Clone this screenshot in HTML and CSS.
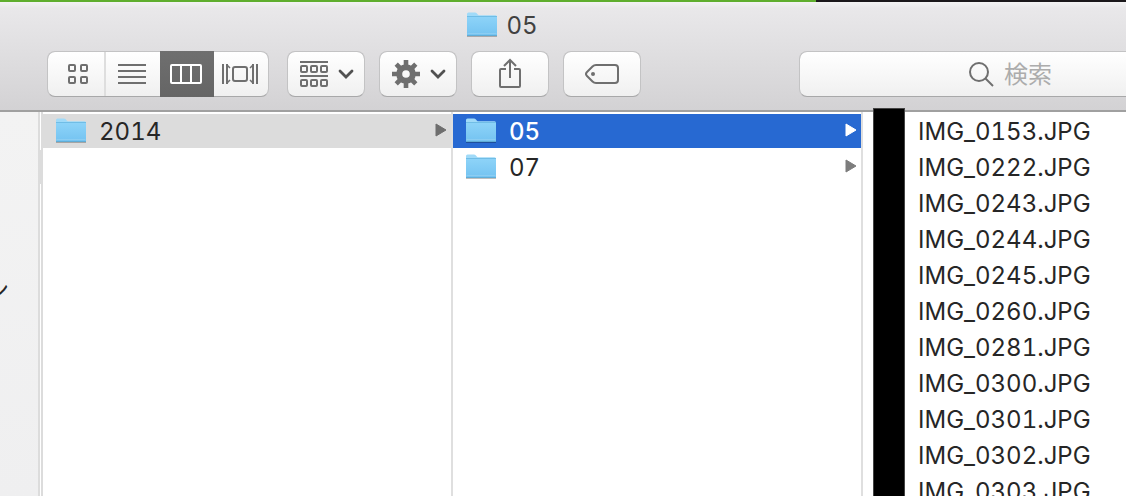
FILE: index.html
```html
<!DOCTYPE html>
<html lang="ja">
<head>
<meta charset="utf-8">
<title>05</title>
<link rel="stylesheet" href="styles.css">
</head>
<body>
<svg class="defs" aria-hidden="true">
  <defs>
    <linearGradient id="folder-front" x1="0" y1="0" x2="0" y2="1">
      <stop offset="0" stop-color="#8dd3f8"/>
      <stop offset="1" stop-color="#74c3f1"/>
    </linearGradient>
    <symbol id="folder" viewBox="0 0 32 28">
      <path d="M1 25h30v1H1z" fill="#000" opacity=".25"/>
      <path d="M1 3Q1 1.500 2.500 1.500H9q1 0 1.700.8L12 3.700q.6.600 1.500.6H29.500Q31 4.300 31 5.800V24H1z" fill="#a0daf8"/>
      <path d="M1 6h30v17.500q0 1-1 1H2q-1 0-1-1z" fill="url(#folder-front)"/>
      <path d="M1 5.500h30" stroke="#70bde6"/>
      <path d="M1.500 22.500h29" stroke="#8bcdf2"/>
      <path d="M1 24.500h30" stroke="#60acd5"/>
    </symbol>
  </defs>
</svg>
<div class="window">
  <div class="backdrop"><span class="backdrop-green"></span></div>
  <header class="chrome">
    <h1 class="title"><svg class="folder"><use href="#folder"/></svg>05</h1>
    <div class="toolbar">
      <div class="segments">
        <button class="segment" aria-label="アイコン">
          <svg width="22" height="22" viewBox="0 0 22 22" fill="none" stroke="#6f6f6f" stroke-width="2"><rect x="2" y="2" width="6" height="6" rx="1"/><rect x="14" y="2" width="6" height="6" rx="1"/><rect x="2" y="14" width="6" height="6" rx="1"/><rect x="14" y="14" width="6" height="6" rx="1"/></svg>
        </button>
        <button class="segment" aria-label="リスト">
          <svg width="28" height="20" viewBox="0 0 28 20" stroke="#6f6f6f" stroke-width="2"><path d="M0 1h28M0 7h28M0 13h28M0 19h28"/></svg>
        </button>
        <button class="segment segment-on" aria-label="カラム" aria-pressed="true">
          <svg width="32" height="20" viewBox="0 0 32 20" fill="none" stroke="#fff" stroke-width="2"><rect x="1" y="1" width="30" height="18" rx="1"/><path d="M11 1v18M21 1v18"/></svg>
        </button>
        <button class="segment" aria-label="Cover Flow">
          <svg width="36" height="20" viewBox="0 0 36 20" fill="none" stroke="#6f6f6f" stroke-width="2"><path d="M1 0v20M35 0v20"/><rect x="11" y="3" width="14" height="14" rx="2"/><path d="M5 0v20M31 0v20"/><path d="M5 1l3 3M5 19l3-3M31 1l-3 3M31 19l-3-3" stroke-width="1.500"/></svg>
        </button>
      </div>
      <button class="tool tool-menu" aria-label="グループ">
        <svg width="28" height="26" viewBox="0 0 28 26" fill="none" stroke="#6f6f6f" stroke-width="2"><path d="M0 1h28M0 15h28"/><rect x="1" y="5" width="6" height="6" rx="1"/><rect x="11" y="5" width="6" height="6" rx="1"/><rect x="21" y="5" width="6" height="6" rx="1"/><rect x="1" y="19" width="6" height="6" rx="1"/><rect x="11" y="19" width="6" height="6" rx="1"/><rect x="21" y="19" width="6" height="6" rx="1"/></svg>
        <svg width="16" height="10" viewBox="0 0 16 10" fill="none" stroke="#515151" stroke-width="2.800" stroke-linecap="round"><path d="M2 2l6 6 6-6"/></svg>
      </button>
      <button class="tool tool-menu" aria-label="アクション">
        <svg width="28" height="28" viewBox="-14 -14 28 28"><circle r="6.800" fill="none" stroke="#6f6f6f" stroke-width="6"/><g stroke="#6f6f6f" stroke-width="4.600"><path d="M0-14V-8M0 14V8M-14 0H-8M14 0H8"/><path d="M-9.800-9.800L-6-6M9.800-9.800L6-6M-9.800 9.800L-6 6M9.800 9.800L6 6"/></g></svg>
        <svg width="16" height="10" viewBox="0 0 16 10" fill="none" stroke="#515151" stroke-width="2.800" stroke-linecap="round"><path d="M2 2l6 6 6-6"/></svg>
      </button>
      <button class="tool" aria-label="共有">
        <svg width="24" height="34" viewBox="0 0 24 34" fill="none" stroke="#6f6f6f" stroke-width="2"><path d="M8 12H3q-1 0-1 1V29q0 1 1 1H21q1 0 1-1V13q0-1-1-1H16M12 21V3M6 9l6-6 6 6"/></svg>
      </button>
      <button class="tool" aria-label="タグ">
        <svg width="34" height="20" viewBox="0 0 34 20" fill="none" stroke="#6f6f6f" stroke-width="2"><path d="M11 1H30q3 0 3 3V16q0 3-3 3H11Q9 19 7.500 17.500L2 12Q0 10 2 8L7.500 2.500Q9 1 11 1z"/><circle cx="8" cy="10" r="2" fill="#6f6f6f" stroke="none"/></svg>
      </button>
      <label class="search">
        <svg width="26" height="26" viewBox="0 0 26 26" fill="none" stroke="#6f6f6f" stroke-width="2"><circle cx="11" cy="11" r="9"/><path d="M17.500 17.500L25 25"/></svg>
        <input class="search-input" type="text" placeholder="検索" aria-label="検索">
      </label>
    </div>
  </header>
  <main class="browser">
    <nav class="sidebar"><span class="sidebar-item">ン</span></nav>
    <div class="splitter"><span class="splitter-grip"></span></div>
    <section class="column">
      <button class="row row-path"><svg class="folder"><use href="#folder"/></svg><span class="name">2014</span><svg class="arrow" viewBox="0 0 14 16"><path d="M2 1l10 6-10 6z"/></svg></button>
    </section>
    <section class="column">
      <button class="row row-selected"><svg class="folder"><use href="#folder"/></svg><span class="name">05</span><svg class="arrow" viewBox="0 0 14 16"><path d="M2 1l10 6-10 6z"/></svg></button>
      <button class="row"><svg class="folder"><use href="#folder"/></svg><span class="name">07</span><svg class="arrow" viewBox="0 0 14 16"><path d="M2 1l10 6-10 6z"/></svg></button>
    </section>
    <section class="files">
      <div class="mask"></div>
      <ul class="file-list">
        <li class="file">IMG_0153.JPG</li>
        <li class="file">IMG_0222.JPG</li>
        <li class="file">IMG_0243.JPG</li>
        <li class="file">IMG_0244.JPG</li>
        <li class="file">IMG_0245.JPG</li>
        <li class="file">IMG_0260.JPG</li>
        <li class="file">IMG_0281.JPG</li>
        <li class="file">IMG_0300.JPG</li>
        <li class="file">IMG_0301.JPG</li>
        <li class="file">IMG_0302.JPG</li>
        <li class="file">IMG_0303.JPG</li>
      </ul>
    </section>
  </main>
</div>
</body>
</html>
```
FILE: styles.css
```css
* { box-sizing: border-box; }
body {
  margin: 0;
  font-family: Inter, "Noto Sans CJK JP", sans-serif;
  font-size: 24px;
  font-variant-numeric: tabular-nums;
  color: #262626;
}
button { font: inherit; font-variant-numeric: inherit; color: inherit; border: 0; padding: 0; margin: 0; }
svg { display: block; flex: none; }
.defs { position: absolute; width: 0; height: 0; }
.window { display: flex; flex-direction: column; height: 100vh; overflow: hidden; }
.backdrop { display: flex; flex: none; height: 2px; background: #1b181b; }
.backdrop-green { width: 816px; background: #5fae2e; }
.chrome {
  flex: none;
  padding-bottom: 13px;
  background: linear-gradient(#f3f3f3, #e9e8ea 6px, #d3d2d4);
  border-bottom: 2px solid #a0a0a0;
}
.title {
  display: flex;
  align-items: center;
  justify-content: center;
  gap: 8px;
  height: 46px;
  margin: 0;
  padding-right: 122px;
  font-size: 24px;
  font-weight: 400;
  color: #414141;
}
.folder { width: 32px; height: 28px; }
.toolbar { display: flex; gap: 14px; height: 49px; padding: 3px 0 0 47px; }
.segments, .tool, .search {
  height: 46px;
  border: 1px solid #c3c3c4;
  border-bottom-color: #a8a8a9;
  border-radius: 8px;
  background: linear-gradient(#fff, #f0f0f0);
  background-clip: padding-box;
}
.segments { display: grid; grid-template-columns: 58px 54px 54px 54px; width: 222px; margin-right: 4px; }
.segment { display: flex; align-items: center; justify-content: center; padding-right: 2px; background: none; }
.segment:first-child { padding: 0 0 0 4px; border-right: 2px solid #dedede; }
.segment-on { margin: -1px 0; background: linear-gradient(#6f6f6f, #656565); }
.tool { display: flex; align-items: center; justify-content: center; width: 78px; }
.tool-menu { gap: 10px; padding-left: 2px; }
.search {
  display: flex;
  flex: 1;
  align-items: center;
  gap: 10px;
  min-width: 0;
  margin-left: 144px;
  padding-left: 168px;
  border-right: 0;
  border-radius: 8px 0 0 8px;
}
.search-input {
  flex: 1;
  min-width: 0;
  padding: 0;
  border: 0;
  outline: 0;
  background: none;
  font: inherit;
}
.search-input::placeholder { color: #acacac; opacity: 1; }
.browser { display: flex; flex: 1; min-height: 0; background: #fff; }
.sidebar { display: flex; justify-content: flex-end; flex: none; width: 38px; padding: 160px 29px 0 0; background: linear-gradient(#f3f3f3, #efeff0); }
.sidebar-item { line-height: 36px; }
.splitter {
  flex: none;
  width: 5px;
  padding: 38px 0 0;
  border: solid #dcdcdc;
  border-width: 0 2px;
}
.splitter-grip { display: block; height: 34px; background: #dcdcdc; }
.column { flex: none; width: 410px; padding-top: 2px; border-right: 2px solid #dfdfdf; }
.row {
  display: flex;
  align-items: center;
  gap: 12px;
  width: 100%;
  height: 34px;
  margin-bottom: 2px;
  padding: 0 3px 0 12px;
  background: none;
  text-align: left;
}
.name { flex: 1; }
.row-path { background: #dcdcdc; }
.row-selected { background: #2769d2; color: #fff; font-weight: 500; }
.arrow { width: 14px; height: 16px; fill: #7d7d7d; stroke: #7d7d7d; stroke-linejoin: round; }
.row-path .arrow { fill: #6e6e6e; stroke: #6e6e6e; }
.row-selected .arrow { fill: #fff; stroke: #fff; }
.files { position: relative; flex: 1; min-width: 0; }
.mask { position: absolute; top: -4px; bottom: 0; left: 10px; width: 32px; background: #000; border: 1px solid #444; border-bottom: 0; }
.file-list { margin: 0; padding: 2px 0 0 55px; list-style: none; }
.file { height: 36px; line-height: 36px; white-space: nowrap; }
```
